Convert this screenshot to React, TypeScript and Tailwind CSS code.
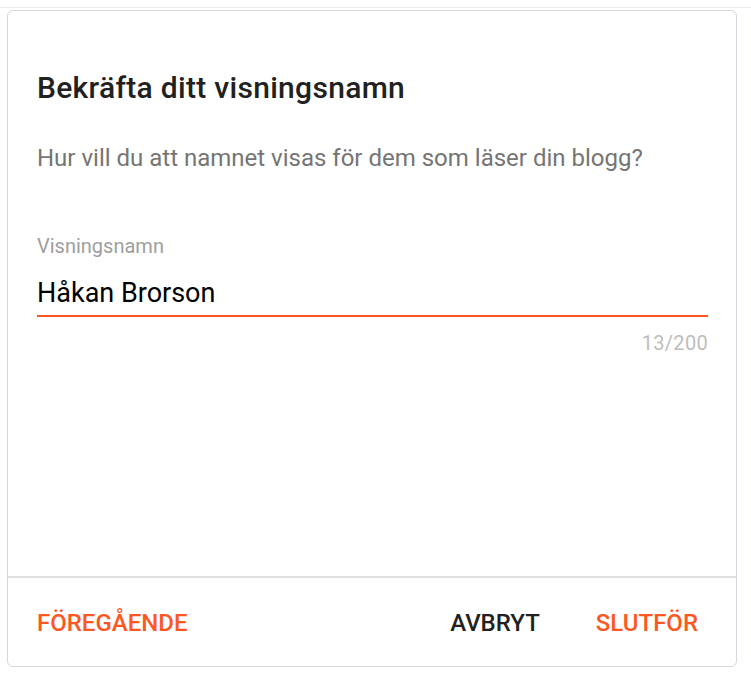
import React from "react";

export default function App() {
  return (
    <div className="w-[751px] h-[676px] bg-white relative" style={{ fontFamily: "Roboto, 'Noto Sans', sans-serif" }}>
      <div className="h-[8px] border-b border-[#e8eaed]" />
      <div className="ml-[7px] mt-[2px] w-[730px] h-[657px] border border-[#d3d9de] rounded-[6px] flex flex-col">
        <div className="flex-1 pl-[29px] pr-[28px] pt-[59px]">
          <div className="text-[30px] leading-[36px] font-medium tracking-[0.3px] text-[#212121]">Bekräfta ditt visningsnamn</div>
          <div className="mt-[36px] text-[24px] leading-[32px] text-[#757575]">Hur vill du att namnet visas för dem som läser din blogg?</div>
          <div className="mt-[58px] text-[20px] leading-[28px] text-[#9e9e9e]">Visningsnamn</div>
          <div className="mt-[16px] pb-[5px] border-b-2 border-[#ff5722] text-[27px] leading-[34px] text-black">Håkan Brorson</div>
          <div className="mt-[12px] text-right text-[20px] leading-[28px] tracking-[0.3px] text-[#bdbdbd]">13/200</div>
        </div>
        <div className="h-[90px] border-t-2 border-[#e0e0e0] flex items-center pt-[2px] pl-[29px] pr-[38px] text-[24px] leading-[32px] font-medium uppercase">
          <span className="text-[#ff5722]">Föregående</span>
          <span className="ml-auto text-[#212121]">Avbryt</span>
          <span className="ml-[56px] text-[#ff5722]">Slutför</span>
        </div>
      </div>
    </div>
  );
}
